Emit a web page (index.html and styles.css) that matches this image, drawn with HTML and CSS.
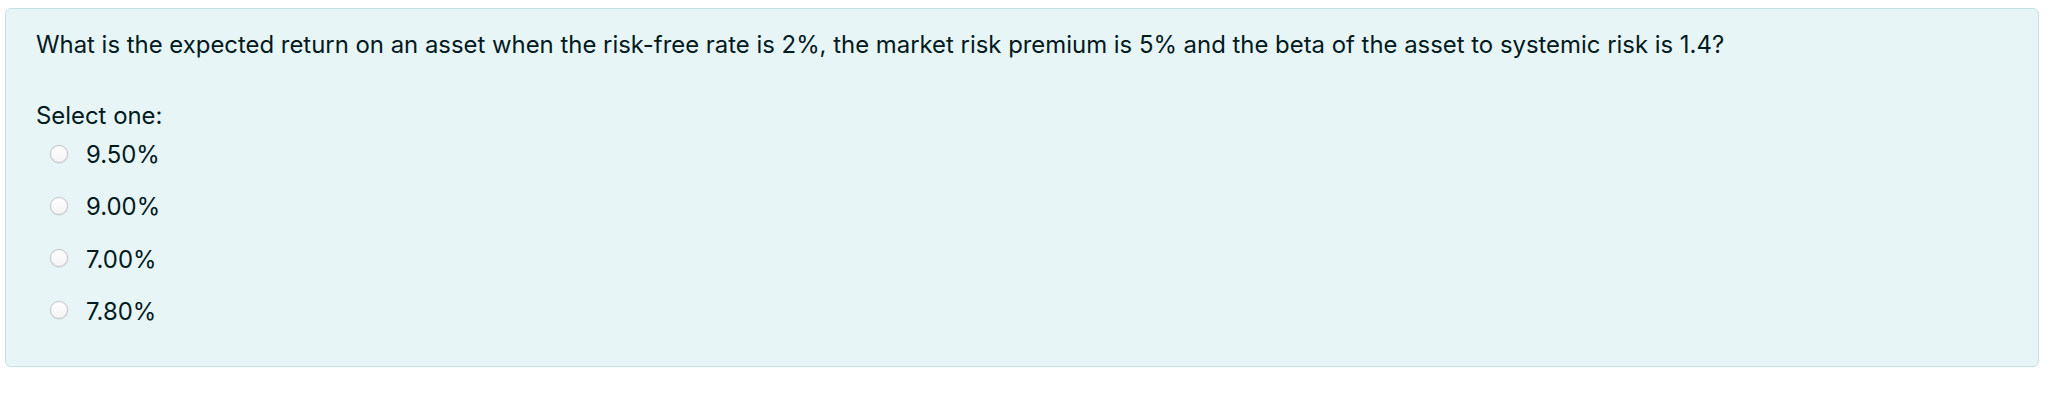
FILE: index.html
```html
<!DOCTYPE html>
<html lang="en">

<head>
    <meta charset="UTF-8">
    <meta name="viewport" content="width=device-width, initial-scale=1.0">
    <title>Question</title>
    <link rel="stylesheet" href="styles.css">
</head>

<body>

    <div class="formulation">
        <!-- question text -->
        <p class="qtext">What is the expected return on an asset when the risk-free rate is 2%, the market risk premium is 5% and the beta of the asset to systemic risk is 1.4?</p>

        <div class="ablock">
            <div class="prompt">Select one:</div>
            <div class="answer">
                <label class="option"><input type="radio" name="q1" value="0"><span>9.50%</span></label>
                <label class="option"><input type="radio" name="q1" value="1"><span>9.00%</span></label>
                <label class="option"><input type="radio" name="q1" value="2"><span>7.00%</span></label>
                <label class="option"><input type="radio" name="q1" value="3"><span>7.80%</span></label>
            </div>
        </div>
    </div>

</body>

</html>
```

FILE: styles.css
```css
body {
    margin: 8px 27px 0 5px;
    background-color: #fff;
    font-family: Inter, "Noto Sans", sans-serif;
    font-size: 23.9px;
    line-height: 34px;
    color: #001a1e;
}
.formulation {
    height: 359px;
    box-sizing: border-box;
    padding: 19px 30px 0 30px;
    background-color: #e8f5f7;
    border: 1.5px solid #c3e0e6;
    border-radius: 6px;
}
.qtext {
    margin: 0 0 37px 0;
}
.answer {
    margin-top: 5px;
}
.option {
    display: flex;
    align-items: center;
    height: 34px;
    margin-bottom: 18.3px;
}
.option input {
    appearance: none;
    -webkit-appearance: none;
    width: 18px;
    height: 18px;
    margin: -3px 18px 0 14px;
    border: 1px solid #c4c4c4;
    border-radius: 50%;
    background: linear-gradient(#ffffff, #f4f4f4);
    box-shadow: 0 0.5px 1.5px rgba(0, 0, 0, 0.12);
}
```
